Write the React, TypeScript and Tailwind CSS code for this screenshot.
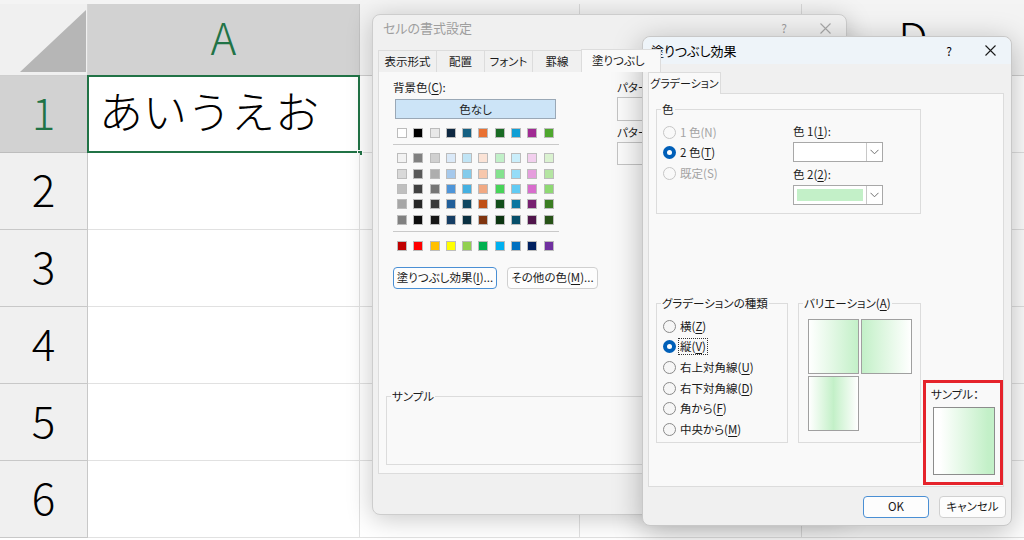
import React from "react";

const ui = "font-['Noto_Sans_CJK_JP','Noto_Sans',sans-serif] [font-feature-settings:'palt']";
const big = "font-['Noto_Sans_CJK_JP','Noto_Sans',sans-serif] font-light";

const themeRow = ["#ffffff", "#000000", "#e8e8e8", "#0e2841", "#156082", "#e97132", "#196b24", "#0f9ed5", "#a02b93", "#4ea72e"];
const tints = [
  ["#f2f2f2", "#808080", "#d0d0d0", "#dae9f8", "#c0e4f5", "#fbe3d6", "#c1f0c8", "#caeefb", "#f2cfee", "#daf2d0"],
  ["#d9d9d9", "#595959", "#aeaeae", "#a6c9ec", "#83cbeb", "#f7c7ac", "#83e28e", "#95dcf7", "#e59edd", "#b4e5a2"],
  ["#bfbfbf", "#404040", "#757575", "#4e95d9", "#45b0e1", "#f1a983", "#47d459", "#61cbf4", "#d86dcd", "#8ed973"],
  ["#a6a6a6", "#262626", "#3a3a3a", "#215f9a", "#104862", "#c04f15", "#124f1a", "#0b76a0", "#772070", "#3a7d22"],
  ["#808080", "#0d0d0d", "#171717", "#153d64", "#0a3041", "#803510", "#0c3511", "#074f6a", "#4f154b", "#275317"],
];
const standard = ["#c00000", "#ff0000", "#ffc000", "#ffff00", "#92d050", "#00b050", "#00b0f0", "#0070c0", "#002060", "#7030a0"];

function U({ children }: { children: React.ReactNode }) {
  return <span className="underline underline-offset-2 decoration-1">{children}</span>;
}

function CloseIcon({ color }: { color: string }) {
  return (
    <svg width="11" height="11" viewBox="0 0 11 11">
      <path d="M0.5 0.5 L10.5 10.5 M10.5 0.5 L0.5 10.5" stroke={color} strokeWidth="1.1" fill="none" />
    </svg>
  );
}

function Chevron() {
  return (
    <svg width="9" height="6" viewBox="0 0 9 6">
      <path d="M0.5 0.8 L4.5 4.8 L8.5 0.8" stroke="#707070" strokeWidth="1" fill="none" />
    </svg>
  );
}

function Swatch({ c }: { c: string }) {
  return <div className="w-[10px] h-[10px] border border-[#bcbcbc]" style={{ backgroundColor: c }} />;
}

function SwatchRow({ colors }: { colors: string[] }) {
  return (
    <div className="grid grid-cols-[repeat(10,10px)] gap-x-[6.3px]">
      {colors.map((c, i) => (
        <Swatch key={i} c={c} />
      ))}
    </div>
  );
}

function Group({ label, className, children }: { label: React.ReactNode; className: string; children?: React.ReactNode }) {
  return (
    <div className={`relative border border-[#dcdcdc] ${className}`}>
      <span className="absolute -top-[9px] left-[4px] px-[1px] bg-[#f9f9f9] leading-[16px] whitespace-nowrap text-[#1a1a1a]">{label}</span>
      {children}
    </div>
  );
}

function Radio({ label, checked, disabled, focus }: { label: React.ReactNode; checked?: boolean; disabled?: boolean; focus?: boolean }) {
  const circle = checked
    ? "bg-[#005fb8]"
    : disabled
    ? "border border-[#c6c6c6] bg-[#f9f9f9]"
    : "border border-[#8a8a8a] bg-[#f6f6f6]";
  return (
    <div className="flex items-center h-[20.6px]">
      <span className={`w-[13px] h-[13px] rounded-full flex items-center justify-center shrink-0 ${circle}`}>
        {checked && <span className="w-[5px] h-[5px] rounded-full bg-white" />}
      </span>
      <span
        className={`ml-[3px] leading-[15px] px-[1px] whitespace-nowrap ${focus ? "outline outline-1 outline-dotted outline-[#333]" : ""} ${
          disabled ? "text-[#a3a3a3]" : "text-[#1a1a1a]"
        }`}
      >
        {label}
      </span>
    </div>
  );
}

function Combo({ fill }: { fill?: string }) {
  return (
    <div className="flex w-[90px] h-[20px] border border-[#a8a8a8] bg-white">
      <div className="flex-1 p-[3px]">{fill && <div className="w-full h-full" style={{ backgroundColor: fill }} />}</div>
      <div className="w-[16px] border-l border-[#c8c8c8] flex items-center justify-center">
        <Chevron />
      </div>
    </div>
  );
}

function Button({ children, primary, className }: { children: React.ReactNode; primary?: boolean; className: string }) {
  return (
    <div
      className={`flex items-center justify-center h-[22px] rounded-[4px] bg-[#fdfdfd] text-[#1a1a1a] whitespace-nowrap ${
        primary ? "border border-[#4a8fd4]" : "border border-[#d0d0d0]"
      } ${className}`}
    >
      {children}
    </div>
  );
}

function Sheet() {
  const rows = [1, 2, 3, 4, 5, 6];
  return (
    <div className="flex flex-col">
      <div className="flex h-[76px] pt-[4px] bg-[#f4f4f4] border-b border-[#cfcfcf]">
        <div className="w-[88px] h-full bg-[#f0f0f0] border-r border-[#d6d6d6]">
          <svg width="88" height="71" viewBox="0 0 88 71">
            <polygon points="20,68 86,68 86,6" fill="#b6b6b6" />
          </svg>
        </div>
        <div className={`w-[272px] h-full pb-[7px] bg-[#d2d2d2] border-r border-[#c4c4c4] flex items-center justify-center text-[44px] text-[#217346] ${big}`}>
          A
        </div>
        <div className="w-[220px] h-full bg-[#f3f3f3] border-r border-[#d8d8d8]" />
        <div className="w-[222px] h-full bg-[#f3f3f3] border-r border-[#d8d8d8]" />
        <div className={`flex-1 h-full pb-[7px] bg-[#f3f3f3] flex items-center justify-center text-[44px] text-black ${big}`}>D</div>
      </div>
      {rows.map((r) => (
        <div key={r} className="flex h-[77px]">
          <div
            className={`w-[88px] h-full pb-[7px] border-r border-b flex items-center justify-center text-[44px] ${big} ${
              r === 1 ? "bg-[#d2d2d2] border-[#bdbdbd] text-[#217346]" : "bg-[#f0f0f0] border-[#c8c8c8] text-black"
            }`}
          >
            {r}
          </div>
          <div className="relative w-[272px] h-full pb-[8px] border-r border-b border-[#e1e1e1] bg-white flex items-center">
            {r === 1 && (
              <>
                <span className={`pl-[11px] text-[44px] text-black ${big}`}>あいうえお</span>
                <div className="absolute -left-px -top-px right-[-1px] bottom-[-1px] border-2 border-[#217346]" />
                <div className="absolute right-[-4px] bottom-[-4px] w-[6px] h-[6px] bg-[#217346] border border-white" />
              </>
            )}
          </div>
          <div className="w-[220px] h-full border-r border-b border-[#e1e1e1] bg-white" />
          <div className="w-[222px] h-full border-r border-b border-[#e1e1e1] bg-white" />
          <div className="flex-1 h-full border-b border-[#e1e1e1] bg-white" />
        </div>
      ))}
    </div>
  );
}

function FormatDialog() {
  const tabs = [
    { t: "表示形式", w: "w-[58px]" },
    { t: "配置", w: "w-[48px]" },
    { t: "フォント", w: "w-[48px]" },
    { t: "罫線", w: "w-[49px]" },
  ];
  return (
    <div
      className={`absolute left-[372px] top-[14px] w-[475px] h-[501px] rounded-[8px] bg-[#f0f0f0] border border-[#cdcdcd] shadow-[0_4px_26px_rgba(0,0,0,0.22)] flex flex-col text-[11.5px] ${ui}`}
    >
      <div className="h-[29px] pb-[3px] flex items-center pl-[10px] text-[13px] text-[#9e9e9e]">
        <span>セルの書式設定</span>
        <span className="ml-auto w-[40px] text-center text-[12px]">?</span>
        <span className="w-[42px] flex justify-center">
          <CloseIcon color="#a8a8a8" />
        </span>
      </div>
      <div className="flex h-[22px] mt-[6px] ml-[5px] relative z-10">
        {tabs.map((tb) => (
          <div key={tb.t} className={`${tb.w} h-full flex items-center justify-center border-t border-l border-[#dcdcdc] bg-[#f0f0f0] text-[#1a1a1a]`}>
            {tb.t}
          </div>
        ))}
        <div className="w-[80px] h-[23px] -mt-px pl-[10px] flex items-center border-t border-l border-r border-[#dcdcdc] bg-[#f9f9f9] text-[#1a1a1a] whitespace-nowrap">
          塗りつぶし
        </div>
      </div>
      <div className="mx-[5px] h-[403px] -mt-px bg-[#f9f9f9] border border-[#dcdcdc] flex flex-col">
        <div className="flex h-[217px]">
          <div className="w-[224px] ml-[14px] pt-[7px] flex flex-col text-[#1a1a1a]">
            <div className="h-[16px] leading-[16px]">
              背景色(<U>C</U>):
            </div>
            <div className="ml-[2px] mt-[4px] w-[161px] h-[21px] bg-[#cce4f7] border border-[#9aa8b6] flex items-center justify-center">
              色なし
            </div>
            <div className="ml-[4px] mt-[9px]">
              <SwatchRow colors={themeRow} />
            </div>
            <div className="mt-[6px] w-[166px] h-px bg-[#c9c9c9]" />
            <div className="ml-[4px] mt-[8px] flex flex-col gap-y-[5.3px]">
              {tints.map((row, i) => (
                <SwatchRow key={i} colors={row} />
              ))}
            </div>
            <div className="mt-[6.5px] w-[166px] h-px bg-[#c9c9c9]" />
            <div className="ml-[4px] mt-[9px]">
              <SwatchRow colors={standard} />
            </div>
            <div className="flex mt-[16px] gap-[10px]">
              <Button primary className="w-[104px]">
                塗りつぶし効果(<U>I</U>)...
              </Button>
              <Button className="w-[91px]">
                その他の色(<U>M</U>)...
              </Button>
            </div>
          </div>
          <div className="pt-[7px] flex flex-col text-[#1a1a1a]">
            <div className="h-[16px] leading-[16px] whitespace-nowrap">
              パターンの色(<U>A</U>):
            </div>
            <div className="mt-[2px] w-[200px] h-[24px] border border-[#c4c4c4] bg-[#fbfbfb]" />
            <div className="mt-[3px] h-[16px] leading-[16px] whitespace-nowrap">
              パターンの種類(<U>P</U>):
            </div>
            <div className="mt-[2px] w-[200px] h-[23px] border border-[#c4c4c4] bg-[#fbfbfb]" />
          </div>
        </div>
        <Group label="サンプル" className="mt-[107px] mx-[7px] h-[69px]" />
      </div>
    </div>
  );
}

function FillEffectDialog() {
  const green = "#c3f0c8";
  return (
    <div
      className={`absolute left-[642px] top-[36px] w-[370px] h-[490px] rounded-[8px] bg-[#f0f0f0] border border-[#c8c8c8] shadow-[0_6px_30px_rgba(0,0,0,0.28)] flex flex-col text-[11.5px] text-[#1a1a1a] ${ui}`}
    >
      <div className="h-[27px] rounded-t-[8px] bg-[#eef4f9] flex items-center pl-[8px] text-[13px] text-black">
        <span>塗りつぶし効果</span>
        <span className="ml-auto w-[40px] text-center text-[12px]">?</span>
        <span className="w-[42px] flex justify-center">
          <CloseIcon color="#1a1a1a" />
        </span>
      </div>
      <div className="flex mt-[8px] ml-[5px] relative z-10">
        <div className="w-[73px] h-[22px] flex items-center justify-center border-t border-l border-r border-[#dcdcdc] bg-[#f9f9f9] text-[11px] whitespace-nowrap">
          グラデーション
        </div>
      </div>
      <div className="ml-[5px] w-[356px] h-[394px] -mt-px bg-[#f9f9f9] border border-[#dcdcdc] flex flex-col pt-[15px] pl-[7px]">
        <Group label="色" className="w-[265px] h-[105px] flex">
          <div className="w-[136px] pl-[6px] pt-[12px] flex flex-col">
            <Radio label="1 色(N)" disabled />
            <Radio
              label={
                <>
                  2 色(<U>T</U>)
                </>
              }
              checked
            />
            <Radio label="既定(S)" disabled />
          </div>
          <div className="pt-[13px] flex flex-col">
            <div className="h-[16px] leading-[16px]">
              色 1(<U>1</U>):
            </div>
            <div className="mt-[3px]">
              <Combo />
            </div>
            <div className="mt-[4px] h-[16px] leading-[16px]">
              色 2(<U>2</U>):
            </div>
            <div className="mt-[3px]">
              <Combo fill={green} />
            </div>
          </div>
        </Group>
        <div className="flex mt-[89px] items-start">
          <Group label="グラデーションの種類" className="w-[132px] h-[140px] pl-[6px] pt-[12px] flex flex-col">
            <Radio label={<>横(<U>Z</U>)</>} />
            <Radio label={<>縦(<U>V</U>)</>} checked focus />
            <Radio label={<>右上対角線(<U>U</U>)</>} />
            <Radio label={<>右下対角線(<U>D</U>)</>} />
            <Radio label={<>角から(<U>F</U>)</>} />
            <Radio label={<>中央から(<U>M</U>)</>} />
          </Group>
          <Group label={<>バリエーション(<U>A</U>)</>} className="ml-[10px] w-[123px] h-[140px] pl-[9px] pt-[15px]">
            <div className="grid grid-cols-[51px_51px] gap-[2px]">
              <div className="h-[55px] border border-[#a0a0a0] bg-linear-to-r from-white to-[#c3f0c8]" />
              <div className="h-[55px] border border-[#a0a0a0] bg-linear-to-r from-[#c3f0c8] to-white" />
              <div className="h-[55px] border border-[#a0a0a0] bg-linear-to-r from-white via-[#c3f0c8] to-white" />
            </div>
          </Group>
          <div className="ml-[2px] mt-[77px] w-[80px] h-[105px] border-[3px] border-[#e5232b] pl-[5px] pt-[3px] flex flex-col">
            <div className="h-[16px] leading-[16px] whitespace-nowrap">サンプル：</div>
            <div className="mt-[5px] ml-[2px] w-[62px] h-[68px] border border-[#8c8c8c] bg-linear-to-r from-white from-10% to-[#c3f0c8] to-90%" />
          </div>
        </div>
      </div>
      <div className="flex justify-end gap-[10px] pr-[5px] mt-[9px]">
        <Button primary className="w-[66px]">
          OK
        </Button>
        <Button className="w-[67px]">キャンセル</Button>
      </div>
    </div>
  );
}

export default function App() {
  return (
    <div className="relative w-[1024px] h-[540px] overflow-hidden bg-white">
      <Sheet />
      <FormatDialog />
      <FillEffectDialog />
    </div>
  );
}
